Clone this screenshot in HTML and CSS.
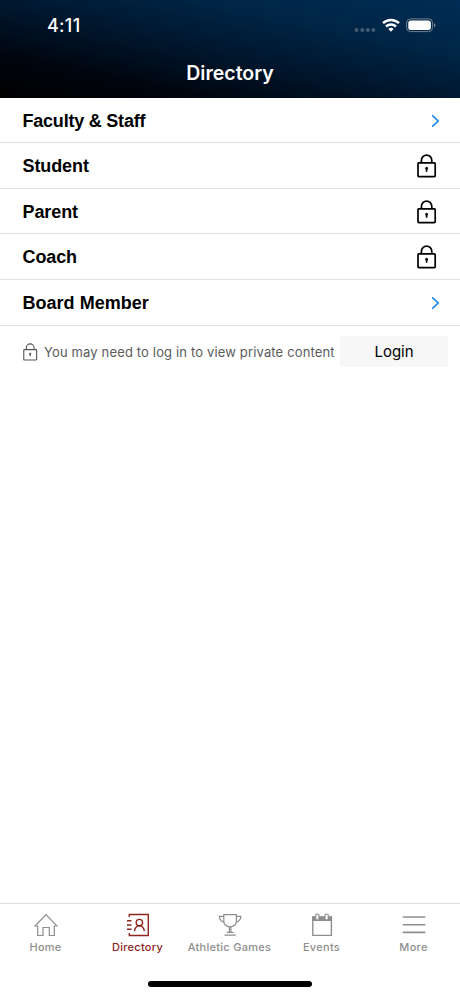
FILE: index.html
```html
<!DOCTYPE html>
<html lang="en">
<head>
<meta charset="utf-8">
<title>Directory</title>
<link rel="stylesheet" href="styles.css">
</head>
<body>
<svg class="defs" width="0" height="0" aria-hidden="true">
  <symbol id="lock" viewBox="0 0 20 24">
    <rect x="1" y="8.900" width="17.200" height="13.700" rx="0.8"/>
    <path d="M4.400 8.700V6.400a5.200 5.200 0 0 1 10.400 0v2.300"/>
    <circle cx="9.600" cy="14.300" r="1" fill="currentColor" stroke-width="1"/>
    <path d="M9.600 14.500v3.200"/>
  </symbol>
  <symbol id="chevron" viewBox="0 0 9 14"><path d="M1.200 1.300 7.200 7l-6 5.700"/></symbol>
</svg>
<div class="screen">
  <header class="header">
    <div class="status">
      <span class="time">4:11</span>
      <svg class="status-icons" width="84" height="18" viewBox="0 0 84 18">
        <g fill="#435a72"><circle cx="3.500" cy="13" r="2"/><circle cx="9.300" cy="13" r="2"/><circle cx="14.900" cy="13" r="2"/><circle cx="20.400" cy="13" r="2"/></g>
        <g fill="none" stroke="#fff" stroke-width="2.500"><path d="M30 6.200a11.600 11.600 0 0 1 16 0"/><path d="M33 9.500a7.300 7.300 0 0 1 10 0"/></g>
        <path d="M38 14.700l-2.600-2.600a3.700 3.700 0 0 1 5.200 0z" fill="#fff"/>
        <rect x="53.600" y="1.900" width="26" height="12.700" rx="4" fill="none" stroke="#72808f"/>
        <rect x="55.300" y="3.600" width="22.600" height="9.300" rx="2.500" fill="#fff"/>
        <path d="M81 6v4.600q1.500-.8 1.500-2.300T81 6" fill="#72808f"/>
      </svg>
    </div>
    <h1 class="title">Directory</h1>
  </header>
  <main class="content">
    <ul class="list">
      <li class="row"><span class="label tight">Faculty &amp; Staff</span><svg class="chevron"><use href="#chevron"/></svg></li>
      <li class="row"><span class="label">Student</span><svg class="lock"><use href="#lock"/></svg></li>
      <li class="row"><span class="label">Parent</span><svg class="lock"><use href="#lock"/></svg></li>
      <li class="row"><span class="label">Coach</span><svg class="lock"><use href="#lock"/></svg></li>
      <li class="row"><span class="label wide">Board Member</span><svg class="chevron"><use href="#chevron"/></svg></li>
    </ul>
    <div class="notice">
      <svg class="lock small"><use href="#lock"/></svg>
      <span class="notice-text">You may need to log in to view private content</span>
      <button class="login">Login</button>
    </div>
  </main>
  <nav class="tabs">
    <a class="tab"><svg viewBox="0 0 24 24"><path d="M1 13 12 1.500 23 13h-2.700v9.500h-5v-8H9v8H3.700V13z"/></svg><span>Home</span></a>
    <a class="tab active"><svg viewBox="0 0 24 24"><g stroke-width="1.400"><path d="M3.300 4V1.500h19v21h-19V20M1 7.800h4.500M1 12h4.500M1 16.200h4.500"/><circle cx="13.400" cy="9.600" r="3.200"/><path d="M8.400 18.200c.5-3.200 2.200-5.300 5-5.300s4.500 2.100 5 5.300"/></g></svg><span>Directory</span></a>
    <a class="tab"><svg viewBox="0 0 24 24"><path d="M5.800 1.700h12.600v6.800c0 3-2.600 5.400-6.300 5.400s-6.300-2.400-6.300-5.400zM5.800 3.300H1.300c.2 3.500 1.800 5.300 5 6M18.400 3.300h4.500c-.2 3.500-1.800 5.300-5 6M11.400 14v5M12.900 14v5M8.700 19.300h6.800M6.500 22.100h11.200"/></svg><span>Athletic Games</span></a>
    <a class="tab"><svg viewBox="0 0 24 24"><path d="M2.800 4h18.600v18.400H2.800z" stroke-width="1.400"/><path d="M2.800 4h18.600v3.500H2.800z" fill="currentColor"/><rect x="5.700" y="1" width="3.300" height="6" rx="1.600" fill="#fff"/><rect x="15" y="1" width="3.300" height="6" rx="1.600" fill="#fff"/></svg><span>Events</span></a>
    <a class="tab"><svg viewBox="0 0 24 24"><path d="M.8 4h22.500M.8 11.700h22.500M.8 19.400h22.500" stroke-width="1.600"/></svg><span>More</span></a>
  </nav>
  <div class="home-area"><div class="home-bar"></div></div>
</div>
</body>
</html>
```
FILE: styles.css
```css
* { box-sizing: border-box; }
body { margin: 0; background: #fff; color: #000; font-family: Inter, sans-serif; }
svg { fill: none; stroke: currentColor; flex: none; }
.defs { position: absolute; }
.screen { display: flex; flex-direction: column; height: 996px; width: 460px; }
.header {
  height: 98px;
  color: #fff;
  background: linear-gradient(192deg, #002d55 0%, #002444 30%, #00152b 55%, #00040c 80%, #000 100%);
}
.status { height: 51px; padding: 0 24px 0 47px; display: flex; justify-content: space-between; align-items: center; }
.time { font-size: 18px; font-weight: 500; letter-spacing: 0.3px; }
.status-icons { stroke: none; margin-right: -0.5px; }
.title { margin: 10px 0 0; font-size: 19.5px; line-height: 24px; font-weight: 600; text-align: center; }
.content { flex: 1; }
.list { list-style: none; margin: 0; padding: 0; }
.row { height: 45.7px; padding: 0 23px 0 22.5px; display: flex; align-items: center; justify-content: space-between; border-bottom: 1px solid #e0e0e0; }
.row:first-child { height: 45px; }
.label { padding-top: 1px; font: bold 18px/24px "Liberation Sans", sans-serif; letter-spacing: -0.1px; }
.tight { letter-spacing: -0.22px; }
.wide { letter-spacing: 0.02px; }
.lock { width: 20px; height: 24px; stroke-width: 1.7; }
.chevron { width: 9px; height: 14px; margin-right: -3px; color: #1985e0; stroke-width: 1.6; }
.row .lock, .row .chevron { margin-top: 1px; }
.notice { display: flex; align-items: center; height: 52px; padding: 0 12px 0 23px; }
.small { width: 15px; height: 18px; color: #555; stroke-width: 1.5; }
.notice-text { margin-left: 6px; width: 296px; white-space: nowrap; font-size: 13px; color: #5b5b5b; letter-spacing: 0.15px; }
.login { flex: none; width: 108px; height: 31px; border: 0; border-radius: 2px; background: #f7f7f7; color: #000; font: 15px Inter, sans-serif; padding: 0; }
.tabs { height: 70px; display: grid; grid-template-columns: repeat(5, 1fr); border-top: 1px solid #dedede; }
.tab { display: flex; flex-direction: column; align-items: center; padding: 9px 1px 0 0; color: #8e8e8e; white-space: nowrap; }
.tab svg { width: 24px; height: 24px; stroke-width: 1.2; }
.tab span { margin-top: 3px; font-size: 11px; line-height: 15px; font-weight: 500; letter-spacing: 0.28px; }
.tab.active { color: #8d241d; }
.home-area { height: 23px; display: flex; justify-content: center; padding-top: 8px; }
.home-bar { width: 164px; height: 6px; border-radius: 3px; background: #000; }
```
